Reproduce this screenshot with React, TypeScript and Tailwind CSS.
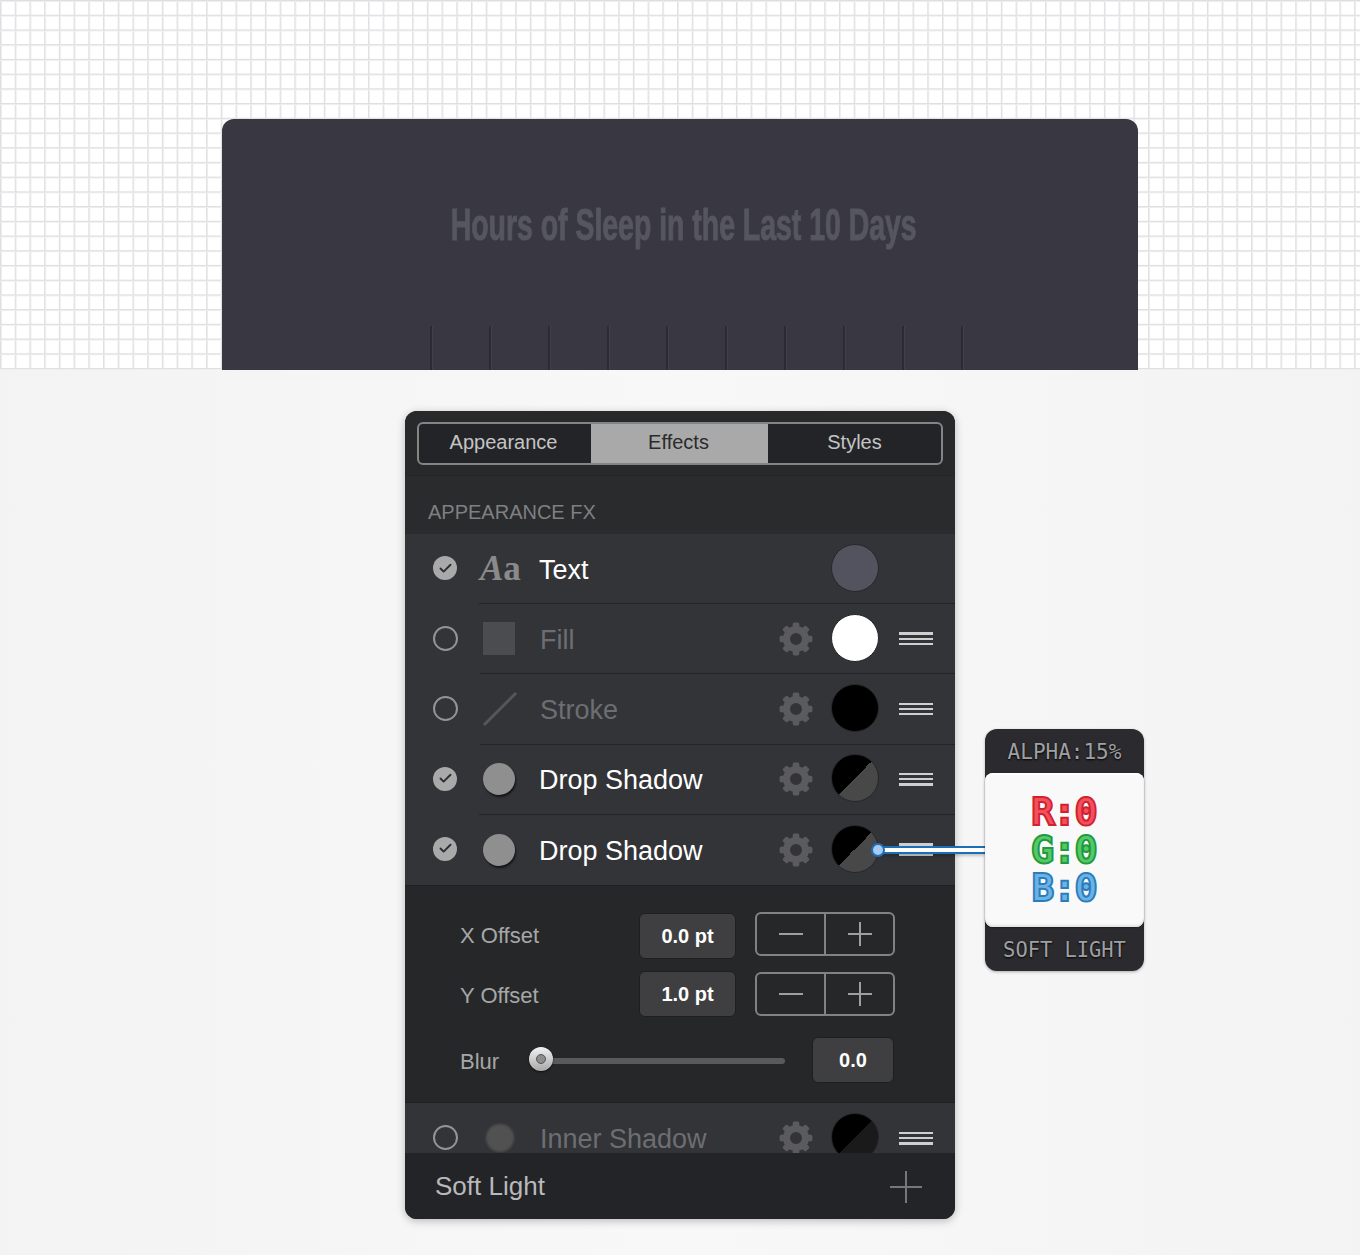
import { Check } from "lucide-react";

const sans = "font-['Liberation_Sans',Arial,sans-serif]";
const mono = "font-['DejaVu_Sans_Mono','Liberation_Mono',monospace]";

function Gear() {
    const teeth = [0, 45, 90, 135, 180, 225, 270, 315];
    return (
        <svg width="34" height="34" viewBox="0 0 34 34" className="shrink-0">
            {teeth.map((deg) => (
                <rect key={deg} x="13.7" y="0.6" width="6.6" height="8" rx="1.6" fill="#5b5b5e" transform={`rotate(${deg} 17 17)`} />
            ))}
            <circle cx="17" cy="17" r="9.5" fill="none" stroke="#5b5b5e" strokeWidth="7" />
        </svg>
    );
}

function MenuLines() {
    return (
        <div className="flex w-[34px] shrink-0 flex-col gap-[3.2px]">
            <div className="h-[2.2px] bg-[#cfcfcf]" />
            <div className="h-[2.2px] bg-[#cfcfcf]" />
            <div className="h-[2.2px] bg-[#cfcfcf]" />
        </div>
    );
}

function Toggle({ on }: { on: boolean }) {
    if (on) {
        return (
            <div className="mb-[2px] flex h-[24px] w-[24px] shrink-0 items-center justify-center rounded-full bg-[#a9a9aa]">
                <Check size={15} strokeWidth={3} color="#2c2d30" />
            </div>
        );
    }
    return <div className="mb-[2px] h-[25px] w-[25px] shrink-0 rounded-full border-2 border-[#949495]" />;
}

function Row({
    on,
    icon,
    label,
    swatch,
    plain,
    last,
}: {
    on: boolean;
    icon: React.ReactNode;
    label: string;
    swatch: string;
    plain?: boolean;
    last?: boolean;
}) {
    return (
        <div className="flex h-[70.2px] items-center bg-[#333438] pl-[28px]">
            <Toggle on={on} />
            <div className={`ml-[22px] flex h-full flex-1 items-center pr-[22px] ${last ? "" : "border-b border-[#232427]"}`}>
                <div className="flex w-[60px] shrink-0 items-center">{icon}</div>
                <div className={`mt-[3px] flex-1 text-[27px] leading-none ${on ? "text-white" : "text-[#6d6e71]"}`}>{label}</div>
                <div className={plain ? "invisible" : ""}>
                    <Gear />
                </div>
                <div className={`mr-[20px] mb-[2px] ml-[18px] h-[48px] w-[48px] shrink-0 rounded-full border border-[#26272a] ${swatch}`} />
                <div className={plain ? "invisible" : ""}>
                    <MenuLines />
                </div>
            </div>
        </div>
    );
}

function Stepper() {
    return (
        <div className="flex h-[44px] w-[140px] rounded-md border-2 border-[#828283]">
            <div className="flex w-[69px] items-center justify-center border-r-2 border-[#828283]">
                <div className="h-[2px] w-[24px] bg-[#9f9fa0]" />
            </div>
            <div className="relative flex flex-1 items-center justify-center">
                <div className="h-[2px] w-[24px] bg-[#9f9fa0]" />
                <div className="absolute h-[24px] w-[2px] bg-[#9f9fa0]" />
            </div>
        </div>
    );
}

function Offset({ label, value, lower }: { label: string; value: string; lower?: boolean }) {
    return (
        <div className="flex h-[46px] items-center">
            <div className={`w-[179px] text-[22px] text-[#a7a7a8] ${lower ? "mt-[4px]" : ""}`}>{label}</div>
            <div className="flex h-[46px] w-[97px] items-center justify-center rounded-md border border-[#1e1f21] bg-[#3f3f41] text-[20px] font-bold text-white">
                {value}
            </div>
            <div className={`ml-[19px] ${lower ? "mt-[1px]" : "mb-[3px]"}`}>
                <Stepper />
            </div>
        </div>
    );
}

export default function App() {
    const ticks = [0, 1, 2, 3, 4, 5, 6, 7, 8, 9];

    return (
        <div className={`h-[1255px] w-full overflow-hidden bg-[linear-gradient(90deg,#f3f3f3,#f8f8f8_50%,#f3f3f3)] ${sans}`}>
            {/* drawing canvas with the grid */}
            <div className="h-[370px] overflow-hidden bg-white bg-[linear-gradient(#dfdfe2_1px,#eeeef0_1px,#eeeef0_2px,transparent_2px),linear-gradient(90deg,#dfdfe2_1px,#eeeef0_1px,#eeeef0_2px,transparent_2px)] bg-[size:14.72px_14.72px] pt-[119px]">
                <div className="mx-auto flex h-[251px] w-[916px] flex-col rounded-t-xl bg-[#393842]">
                    <div className="mt-[81px] flex justify-center pl-[7px]">
                        <div className="origin-center scale-x-[0.646] text-[44px] leading-[50px] font-bold whitespace-nowrap text-[#565660] [-webkit-text-stroke:1px_#565660]">
                            Hours of Sleep in the Last 10 Days
                        </div>
                    </div>
                    <div className="mt-auto flex h-[44px] gap-[56px] pl-[208px]">
                        {ticks.map((t) => (
                            <div key={t} className="h-full w-[3px] border-r border-[#42414b] bg-[#2c2b34]" />
                        ))}
                    </div>
                </div>
            </div>

            <div className="relative mx-auto mt-[41px] w-[550px]">
                {/* panel */}
                <div className="overflow-hidden rounded-xl bg-[#2a2b2d] shadow-[0_2px_8px_rgba(0,0,0,0.25)]">
                    <div className="h-[65px] border-b border-[#242527] bg-[#28292b] px-[12px] pt-[11px]">
                        <div className="flex h-[43px] overflow-hidden rounded-md border-2 border-[#848484] bg-[#232427] text-[20px]">
                            <div className="flex w-[172px] items-center justify-center pr-[3px] pb-[3px] text-[#c4c4c5]">Appearance</div>
                            <div className="flex w-[177px] items-center justify-center bg-[#a9a9a9] pr-[2px] pb-[3px] text-[#2b2b2d]">Effects</div>
                            <div className="flex flex-1 items-center justify-center pb-[3px] text-[#c4c4c5]">Styles</div>
                        </div>
                    </div>
                    <div className="flex h-[58px] items-end pb-[10px] pl-[23px] text-[20px] leading-[24px] text-[#7f8082]">APPEARANCE FX</div>

                    <Row
                        on
                        plain
                        label="Text"
                        swatch="bg-[#53535f]"
                        icon={
                            <span className="ml-[1px] font-['Liberation_Serif',serif] text-[35px] leading-none font-bold text-[#8a8a8b]">
                                <span className="italic">A</span>a
                            </span>
                        }
                    />
                    <Row on={false} label="Fill" swatch="bg-white" icon={<div className="ml-[3px] h-[33px] w-[32px] bg-[#4b4c4f]" />} />
                    <Row
                        on={false}
                        label="Stroke"
                        swatch="bg-black"
                        icon={
                            <svg width="36" height="36" viewBox="0 0 36 36" className="ml-[2px]">
                                <line x1="2" y1="34" x2="34" y2="2" stroke="#56575a" strokeWidth="3" />
                            </svg>
                        }
                    />
                    <Row
                        on
                        label="Drop Shadow"
                        swatch="bg-[linear-gradient(135deg,#000_50%,#484849_50%)]"
                        icon={<div className="ml-[4px] h-[32px] w-[32px] rounded-full bg-[#8f8f90] shadow-[1px_2px_2px_rgba(0,0,0,0.6)]" />}
                    />
                    <Row
                        on
                        last
                        label="Drop Shadow"
                        swatch="bg-[linear-gradient(135deg,#000_50%,#484849_50%)]"
                        icon={<div className="ml-[4px] h-[32px] w-[32px] rounded-full bg-[#8f8f90] shadow-[1px_2px_2px_rgba(0,0,0,0.6)]" />}
                    />

                    {/* shadow settings */}
                    <div className="h-[218px] border-y border-[#1f2022] bg-[#262729] pt-[27px] pl-[55px]">
                        <Offset label="X Offset" value="0.0 pt" />
                        <div className="mt-[12px]">
                            <Offset label="Y Offset" value="1.0 pt" lower />
                        </div>
                        <div className="mt-[20px] flex h-[46px] items-center">
                            <div className="mt-[3px] w-[69px] text-[22px] text-[#a7a7a8]">Blur</div>
                            <div className="relative mt-[3px] h-[6px] w-[256px] rounded-full bg-[#5a5a5b]">
                                <div className="absolute top-[-11px] left-0 flex h-[24px] w-[24px] items-center justify-center rounded-full bg-[linear-gradient(#f2f2f2,#a8a8a8)] shadow-[0_1px_2px_rgba(0,0,0,0.7)]">
                                    <div className="h-[10px] w-[10px] rounded-full border border-[#555] bg-[#8d8d8d]" />
                                </div>
                            </div>
                            <div className="ml-[27px] flex h-[46px] w-[82px] items-center justify-center rounded-md border border-[#1e1f21] bg-[#3f3f41] text-[20px] font-bold text-white">
                                0.0
                            </div>
                        </div>
                    </div>

                    {/* row cut off by the footer */}
                    <div className="h-[50px] overflow-hidden">
                        <Row
                            on={false}
                            last
                            label="Inner Shadow"
                            swatch="bg-[linear-gradient(135deg,#000_50%,#1a1a1b_50%)]"
                            icon={<div className="ml-[6px] h-[28px] w-[28px] rounded-full bg-[#515152] blur-[1px]" />}
                        />
                    </div>

                    <div className="flex h-[66px] items-center justify-between bg-[#232427] pt-[2px] pr-[33px] pl-[30px]">
                        <div className="text-[26px] text-[#b9b9ba]">Soft Light</div>
                        <div className="relative flex h-[32px] w-[32px] items-center justify-center">
                            <div className="h-[2px] w-[32px] bg-[#77777a]" />
                            <div className="absolute h-[32px] w-[2px] bg-[#77777a]" />
                        </div>
                    </div>
                </div>

                {/* connector from swatch to popup */}
                <div className="absolute top-[435px] left-[472px] flex h-[8px] w-[108px] flex-col justify-between bg-white shadow-[0_2px_3px_rgba(0,0,0,0.2)]">
                    <div className="h-[2px] bg-[#1c6fb7]" />
                    <div className="h-[2px] bg-[#1c6fb7]" />
                </div>
                <div className="absolute top-[432px] left-[466px] h-[14px] w-[14px] rounded-full border-2 border-[#1c6fb7] bg-[#abc9ef]" />

                {/* color popup */}
                <div className="absolute top-[318px] left-[580px] flex h-[242px] w-[159px] flex-col rounded-xl bg-[#2a2a2f] shadow-[0_1px_3px_rgba(0,0,0,0.3)]">
                    <div className={`flex h-[44px] items-center justify-center pt-[2px] text-[21px] leading-none text-[#a0a0a2] [text-shadow:0_1px_2px_#000] ${mono}`}>ALPHA:15%</div>
                    <div className={`flex h-[154px] flex-col items-center justify-center rounded-lg bg-[#f9f9f9] text-[36px] leading-[38px] [paint-order:stroke_fill] shadow-[inset_0_2px_0_#ffffff,inset_0_-2px_2px_#e4e4e4,0_1px_2px_rgba(0,0,0,0.3)] ${mono}`}>
                        <div className="text-[#f4505c] [-webkit-text-stroke:4px_#cf2231]">R:0</div>
                        <div className="text-[#55c86a] [-webkit-text-stroke:4px_#1f9a3c]">G:0</div>
                        <div className="text-[#6cb2e4] [-webkit-text-stroke:4px_#2a7dbb]">B:0</div>
                    </div>
                    <div className={`flex flex-1 items-center justify-center pt-[3px] text-[20.4px] leading-none text-[#a0a0a2] [text-shadow:0_1px_2px_#000] ${mono}`}>SOFT LIGHT</div>
                </div>
            </div>
        </div>
    );
}
